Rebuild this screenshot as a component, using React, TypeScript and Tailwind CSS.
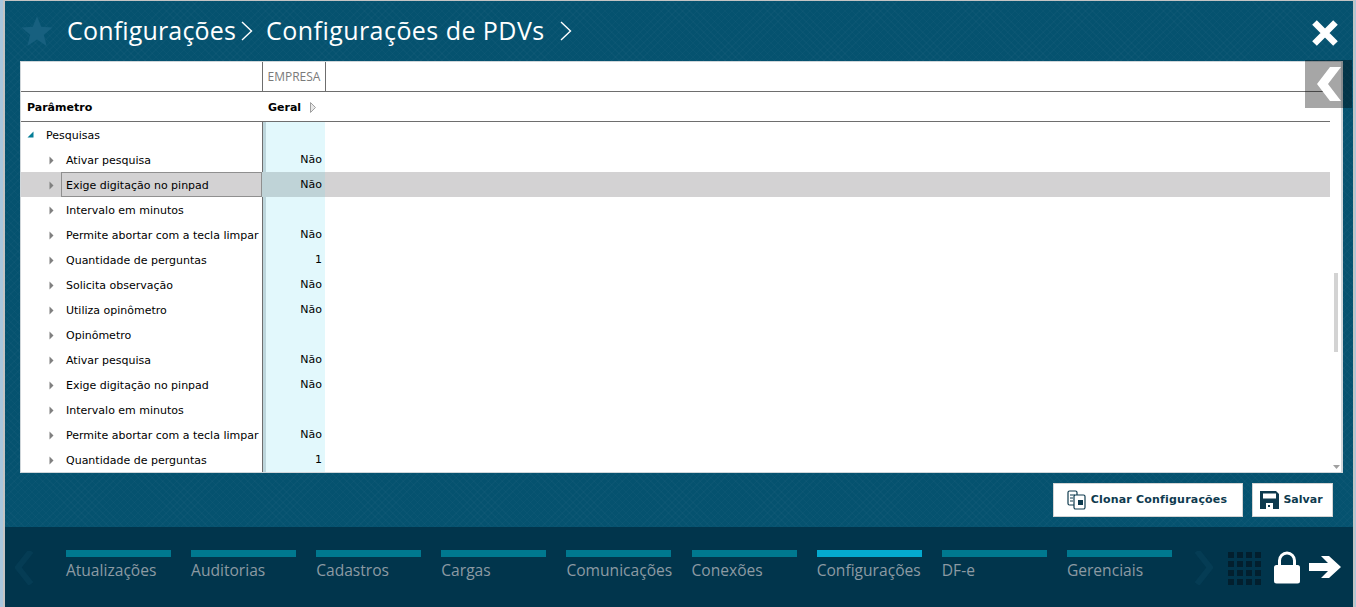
import React from "react";

const rows: [string, string][] = [
  ["Ativar pesquisa", "Não"],
  ["Exige digitação no pinpad", "Não"],
  ["Intervalo em minutos", ""],
  ["Permite abortar com a tecla limpar", "Não"],
  ["Quantidade de perguntas", "1"],
  ["Solicita observação", "Não"],
  ["Utiliza opinômetro", "Não"],
  ["Opinômetro", ""],
  ["Ativar pesquisa", "Não"],
  ["Exige digitação no pinpad", "Não"],
  ["Intervalo em minutos", ""],
  ["Permite abortar com a tecla limpar", "Não"],
  ["Quantidade de perguntas", "1"],
];

const tabs = ["Atualizações", "Auditorias", "Cadastros", "Cargas", "Comunicações", "Conexões", "Configurações", "DF-e", "Gerenciais"];

function Arrow() {
  return (
    <svg width="5" height="9" viewBox="0 0 5 9" className="mt-[1px] shrink-0">
      <path d="M0.5 0.5 L4.5 4.5 L0.5 8.5 Z" fill="#808080" />
    </svg>
  );
}

function Row({ label, value, selected }: { label: string; value: string; selected?: boolean }) {
  return (
    <div className={`flex h-[25px] w-[1309px] ${selected ? "bg-[#d3d2d3]" : ""}`}>
      <div className="flex w-[241px] items-center pl-[28px]">
        <Arrow />
        <div className={`ml-[7px] flex h-[25px] flex-1 items-center whitespace-nowrap border pl-[4px] pt-[4px] ${selected ? "border-[#8f8f8f]" : "border-transparent"}`}>
          {label}
        </div>
      </div>
      <div className={`flex h-[25px] w-[63px] items-center justify-end pr-[3px] pt-[2px] ${selected ? "bg-[#bfd3d7]" : ""}`}>{value}</div>
    </div>
  );
}

export default function App() {
  return (
    <div className="h-[607px] w-[1356px] overflow-hidden bg-[#a9c6dc] pl-[3px] pr-[1px] font-['Liberation_Sans',sans-serif]">
      <div className="h-[607px] border-x-2 border-t border-[#c4c4c4]">
        <div className="flex h-[606px] flex-col bg-[#05526f] bg-[repeating-linear-gradient(45deg,#ffffff05_0,#ffffff05_1px,transparent_1px,transparent_5px),repeating-linear-gradient(-45deg,#ffffff05_0,#ffffff05_1px,transparent_1px,transparent_5px)]">
          <header className="relative flex h-[60px] shrink-0 items-center pl-[15px] font-['Open_Sans',sans-serif] text-white">
            <svg width="34" height="34" viewBox="0 0 24 24" className="shrink-0">
              <path d="M12 1.5 L15 9 L23 9.5 L16.8 14.6 L18.8 22.5 L12 18 L5.2 22.5 L7.2 14.6 L1 9.5 L9 9 Z" fill="#17607f" />
            </svg>
            <span className="-mt-[2px] ml-[13px] text-[25px] leading-none tracking-[0.17px]">Configurações</span>
            <svg width="12" height="20" viewBox="0 0 12 20" className="ml-[5px]" fill="none" stroke="#fff" strokeWidth="1.4"><path d="M1 1 L10.5 10 L1 19" /></svg>
            <span className="-mt-[2px] ml-[13px] text-[25px] leading-none tracking-[0.45px]">Configurações de PDVs</span>
            <svg width="12" height="20" viewBox="0 0 12 20" className="ml-[15px]" fill="none" stroke="#fff" strokeWidth="1.4"><path d="M1 1 L10.5 10 L1 19" /></svg>
            <svg width="28" height="28" viewBox="0 0 28 28" className="absolute left-[1306px] top-[18px]">
              <path d="M3.5 3.5 L24.5 24.5 M24.5 3.5 L3.5 24.5" stroke="#fff" strokeWidth="6.5" />
            </svg>
          </header>

          <main className="relative ml-[15px] h-[412px] w-[1323px] shrink-0 overflow-hidden border border-[#cfd6da] border-r-[2px] bg-white font-['DejaVu_Sans',sans-serif] text-[11px] text-black">
            <div className="flex h-[30px] w-[1309px] border-b border-[#6e6e6e]">
              <div className="w-[242px] border-r border-[#6e6e6e]" />
              <div className="flex w-[63px] items-center justify-center border-r border-[#6e6e6e] font-['Open_Sans',sans-serif] text-[12px] text-[#7a7a7a]">EMPRESA</div>
            </div>
            <div className="flex h-[30px] w-[1309px] items-center border-b border-[#6e6e6e] pt-[4px] font-bold">
              <div className="w-[247px] pl-[6px]">Parâmetro</div>
              <div className="flex items-center">
                Geral
                <svg width="6" height="11" viewBox="0 0 6 11" className="-mt-[2px] ml-[9px]"><path d="M0.5 0.5 L5.5 5.5 L0.5 10.5 Z" fill="#e8e8e8" stroke="#a0a0a0" /></svg>
              </div>
            </div>
            <div className="relative">
              <div className="absolute bottom-0 left-[241px] top-0 h-[360px] w-[63px] bg-[#e2f8fc]">
                <div className="h-full w-[4px] bg-[#bdd6dc]" />
              </div>
              <div className="absolute left-[241px] top-0 h-[360px] w-px bg-[#6e6e6e]" />
              <div className="relative">
                <div className="flex h-[25px] items-center pb-[1px]">
                  <svg width="7" height="7" viewBox="0 0 7 7" className="ml-[6px]"><path d="M0.5 6.5 L6.5 6.5 L6.5 0.5 Z" fill="#047d96" /></svg>
                  <span className="ml-[12px] mt-[4px]">Pesquisas</span>
                </div>
                {rows.map((r, i) => (
                  <Row key={i} label={r[0]} value={r[1]} selected={i === 1} />
                ))}
              </div>
            </div>
            <div className="absolute left-[1313px] top-[211px] h-[79px] w-[4px] bg-[#d3d3d3]" />
            <svg width="7" height="4" viewBox="0 0 7 4" className="absolute left-[1312px] top-[403px]"><path d="M0 0 L7 0 L3.5 4 Z" fill="#a0a0a0" /></svg>
          </main>

          <div className="absolute left-[1305px] top-[60px] flex h-[48px] w-[47px] items-center bg-black/35">
            <svg width="24" height="34" viewBox="0 0 24 34" className="ml-[12px]"><path d="M24 0 L11 17 L24 34 L13 34 L0 17 L13 0 Z" fill="#fff" /></svg>
          </div>

          <div className="flex h-[54px] shrink-0 items-center justify-end gap-[9px] pr-[20px] font-['DejaVu_Sans',sans-serif] text-[11px] font-bold text-[#0e3a4e]">
            <button className="flex h-[34px] w-[190px] items-center justify-center gap-[4px] border border-[#d4d4d4] bg-white pr-[2px] tracking-[0.2px]">
              <svg width="20" height="20" viewBox="0 0 20 20" fill="none" stroke="#0e3a4e" strokeWidth="1.2">
                <rect x="1" y="1" width="9" height="14" rx="1.5" fill="#fff" />
                <rect x="7" y="5" width="11" height="14" rx="1.5" fill="#fff" />
                <path d="M3 5h5M3 8h3M3 11h3" />
                <rect x="11" y="10" width="5" height="5" fill="#0e3a4e" stroke="none" />
              </svg>
              Clonar Configurações
            </button>
            <button className="flex h-[34px] w-[81px] items-center justify-center gap-[4px] border border-[#d4d4d4] bg-white pr-[2px]">
              <svg width="19" height="18" viewBox="0 0 19 18">
                <path d="M0 0 H16 L19 3 V18 H0 Z" fill="#0e3a4e" />
                <rect x="3" y="2.5" width="13" height="5" fill="#fff" />
                <rect x="6" y="12" width="7" height="6" fill="#fff" />
                <rect x="8" y="14" width="2" height="2" fill="#0e3a4e" />
              </svg>
              Salvar
            </button>
          </div>

          <footer className="relative flex h-[80px] flex-1 items-start bg-[#01354c] pl-[60.9px] pt-[23px] font-['Open_Sans',sans-serif] text-[15.6px] text-[#8c9aa3]">
            <svg width="18" height="34" viewBox="0 0 18 34" className="absolute left-[10px] top-[24px]"><path d="M16 0 L3 16.5 L16 33" fill="none" stroke="#053c54" strokeWidth="6" /></svg>
            <div className="flex gap-[20.125px]">
              {tabs.map((t) => (
                <div key={t} className="w-[105px]">
                  <div className={`h-[7px] ${t === "Configurações" ? "bg-[#04a9cf]" : "bg-[#00788f]"}`} />
                  <div className="mt-[3px] whitespace-nowrap leading-[20px]">{t}</div>
                </div>
              ))}
            </div>
            <svg width="18" height="34" viewBox="0 0 18 34" className="absolute left-[1190px] top-[24px]"><path d="M2 0 L15 16.5 L2 33" fill="none" stroke="#053c54" strokeWidth="6" /></svg>
            <div className="absolute left-[1223px] top-[25px] grid grid-cols-4 gap-[3px]">
              {Array.from({ length: 16 }).map((_, i) => (
                <div key={i} className="h-[6px] w-[6px] bg-[#021f2e]" />
              ))}
            </div>
            <svg width="28" height="33" viewBox="0 0 28 33" className="absolute left-[1268px] top-[24px]">
              <path d="M6.5 16 V9.5 a7.5 7.5 0 0 1 15 0 V16" fill="none" stroke="#fff" strokeWidth="3" />
              <rect x="1" y="14" width="26" height="18.5" rx="2.5" fill="#fff" />
            </svg>
            <svg width="32" height="24" viewBox="0 0 32 24" className="absolute left-[1304px] top-[28px]">
              <path d="M0 8 H19 L12 1 H20 L32 12 L20 23 H12 L19 16 H0 Z" fill="#fff" />
            </svg>
          </footer>
        </div>
      </div>
    </div>
  );
}
